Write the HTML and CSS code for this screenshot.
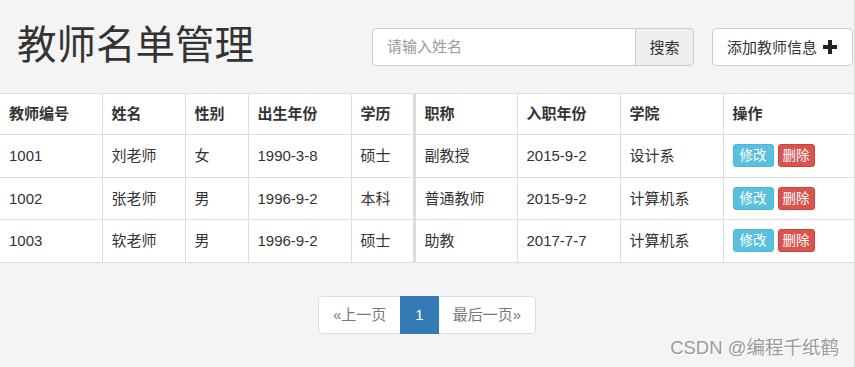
FILE: index.html
```html
<!DOCTYPE html>
<html lang="zh-CN">
<head>
<meta charset="utf-8">
<title>教师名单管理</title>
<link rel="stylesheet" href="styles.css">
</head>
<body>
<div class="page">
  <header class="top">
    <h1 class="title">教师名单管理</h1>
    <div class="search">
      <input class="search-input" type="text" placeholder="请输入姓名">
      <button class="btn btn-search" type="button">搜索</button>
    </div>
    <button class="btn btn-add" type="button">添加教师信息<svg class="plus" viewBox="0 0 14 14" width="14" height="14"><rect x="5" y="0" width="4" height="14"/><rect x="0" y="5" width="14" height="4"/></svg></button>
  </header>

  <table class="grid">
    <colgroup>
      <col class="c1"><col class="c2"><col class="c3"><col class="c4"><col class="c5"><col class="c6"><col class="c7"><col class="c8"><col class="c9">
    </colgroup>
    <thead>
      <tr>
        <th>教师编号</th><th>姓名</th><th>性别</th><th>出生年份</th><th>学历</th><th class="split">职称</th><th>入职年份</th><th>学院</th><th>操作</th>
      </tr>
    </thead>
    <tbody>
      <tr>
        <td>1001</td><td>刘老师</td><td>女</td><td>1990-3-8</td><td>硕士</td><td class="split">副教授</td><td>2015-9-2</td><td>设计系</td>
        <td><div class="ops"><button class="mini mini-info" type="button">修改</button><button class="mini mini-danger" type="button">删除</button></div></td>
      </tr>
      <tr>
        <td>1002</td><td>张老师</td><td>男</td><td>1996-9-2</td><td>本科</td><td class="split">普通教师</td><td>2015-9-2</td><td>计算机系</td>
        <td><div class="ops"><button class="mini mini-info" type="button">修改</button><button class="mini mini-danger" type="button">删除</button></div></td>
      </tr>
      <tr>
        <td>1003</td><td>软老师</td><td>男</td><td>1996-9-2</td><td>硕士</td><td class="split">助教</td><td>2017-7-7</td><td>计算机系</td>
        <td><div class="ops"><button class="mini mini-info" type="button">修改</button><button class="mini mini-danger" type="button">删除</button></div></td>
      </tr>
    </tbody>
  </table>

  <nav class="pager">
    <ul class="pager-list">
      <li class="pager-item"><a class="pager-link" href="#">«上一页</a></li>
      <li class="pager-item"><a class="pager-link is-active" href="#">1</a></li>
      <li class="pager-item"><a class="pager-link" href="#">最后一页»</a></li>
    </ul>
  </nav>

  <div class="watermark">CSDN @编程千纸鹤</div>
</div>
</body>
</html>
```

FILE: styles.css
```css
* { box-sizing: border-box; }

html, body {
  margin: 0;
  padding: 0;
  background: #f4f4f4;
}

body {
  font-family: "Liberation Sans", "Noto Sans CJK SC", sans-serif;
  font-size: 15px;
  color: #333;
}

.page {
  position: relative;
  width: 855px;
  height: 367px;
  border-right: 1px solid #dcdcdc;
  overflow: hidden;
}

/* header */
.top {
  display: flex;
  align-items: center;
  height: 93px;
  padding: 0 1px 0 17px;
}

.title {
  margin: 0 0 2px 0;
  font-size: 39.5px;
  font-weight: 400;
  line-height: 1.1;
  color: #333;
  white-space: nowrap;
}

.search {
  display: flex;
  margin-left: auto;
  height: 38px;
}

.search-input {
  width: 264px;
  height: 38px;
  padding: 0 14px;
  border: 1px solid #ccc;
  border-radius: 4px 0 0 4px;
  background: #fff;
  font-family: inherit;
  font-size: 15px;
  color: #555;
  outline: none;
}

.search-input::placeholder { color: #999; }

.btn {
  font-family: inherit;
  font-size: 15px;
  color: #333;
  cursor: pointer;
  border: 1px solid #ccc;
}

.btn-search {
  width: 59px;
  height: 38px;
  margin-left: -1px;
  padding: 0;
  background: #eee;
  border-radius: 0 4px 4px 0;
}

.btn-add {
  display: flex;
  align-items: center;
  width: 141px;
  height: 38px;
  margin-left: 18px;
  padding: 0 0 0 14px;
  background: #fff;
  border-radius: 4px;
}

.plus {
  margin-left: 6px;
  fill: #222;
}

/* table */
.grid {
  width: 854px;
  border-collapse: collapse;
  table-layout: fixed;
  background: #fff;
}

.c1 { width: 102px; }
.c2 { width: 83px; }
.c3 { width: 63px; }
.c4 { width: 103px; }
.c5 { width: 63px; }
.c6 { width: 103px; }
.c7 { width: 103px; }
.c8 { width: 103px; }
.c9 { width: 131px; }

.grid th,
.grid td {
  border: 1px solid #ddd;
  padding: 10px 9px;
  text-align: left;
  vertical-align: middle;
  white-space: nowrap;
}

.grid th {
  font-weight: 700;
  line-height: 20px;
}

.grid td {
  line-height: 21.5px;
}

.grid th:first-child,
.grid td:first-child { border-left: none; }

.grid th:last-child,
.grid td:last-child { border-right: none; }

.grid .split { border-left: 3px solid #ddd; }

.ops {
  display: flex;
  align-items: center;
  gap: 4px;
  height: 21.5px;
}

.mini {
  flex: none;
  height: 23px;
  padding: 0 6px;
  border: 1px solid transparent;
  border-radius: 3px;
  font-family: inherit;
  font-size: 13.5px;
  line-height: 21px;
  color: #fff;
}

.mini-info {
  background: #5bc0de;
  border-color: #46b8da;
}

.mini-danger {
  padding: 0 4px;
  background: #d9534f;
  border-color: #d43f3a;
}

/* pagination */
.pager {
  display: flex;
  justify-content: center;
  margin-top: 33px;
}

.pager-list {
  display: flex;
  margin: 0;
  padding: 0;
  list-style: none;
}

.pager-link {
  display: block;
  height: 38px;
  padding: 0 14px;
  margin-left: -1px;
  border: 1px solid #ddd;
  background: #fff;
  color: #777;
  font-size: 15px;
  line-height: 36px;
  text-decoration: none;
}

.pager-item:first-child .pager-link {
  margin-left: 0;
  border-radius: 4px 0 0 4px;
}

.pager-item:last-child .pager-link {
  border-radius: 0 4px 4px 0;
}

.pager-link.is-active {
  position: relative;
  background: #337ab7;
  border-color: #337ab7;
  color: #fff;
}

/* watermark overlay */
.watermark {
  position: absolute;
  right: 15px;
  bottom: 8px;
  font-size: 18.5px;
  color: #9a9a9a;
  text-shadow: 1px 1px 0 #fff;
  white-space: nowrap;
}
```
